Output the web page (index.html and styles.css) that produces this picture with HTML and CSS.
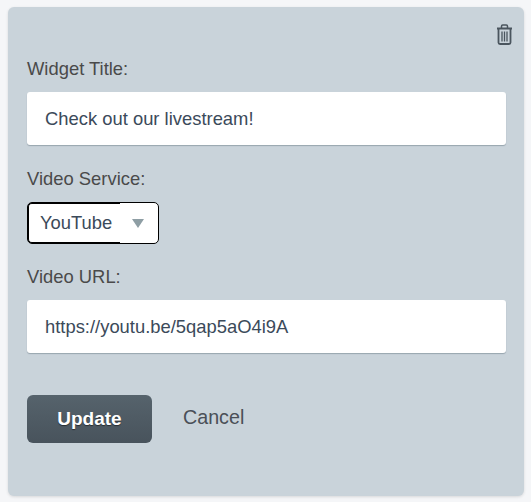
FILE: index.html
```html
<!DOCTYPE html>
<html lang="en">

<head>
    <meta charset="UTF-8">
    <title>Edit Widget</title>
    <link rel="stylesheet" href="styles.css">
</head>

<body>
    <form class="widget-form">
        <div class="toolbar">
            <button type="button" class="delete" aria-label="Delete">
                <svg width="17" height="21" viewBox="0 0 17 21" fill="none" stroke="#4a555e">
                    <path d="M1 4.500h15" stroke-width="2" />
                    <path d="M5.500 4V2.200C5.500 1.500 6 1 6.700 1h3.600c.7 0 1.200.5 1.200 1.200V4" stroke-width="1.500" />
                    <path d="M2.500 5v13.500c0 .8.600 1.500 1.500 1.500h9c.9 0 1.500-.7 1.500-1.500V5" stroke-width="1.800" />
                    <path d="M6 7.500v10M8.500 7.500v10M11 7.500v10" stroke-width="1.300" />
                </svg>
            </button>
        </div>

        <div class="field">
            <label for="title">Widget Title:</label>
            <input id="title" type="text" value="Check out our livestream!">
        </div>

        <div class="field field-select">
            <label for="service">Video Service:</label>
            <div class="select" id="service">
                <span class="select-value">YouTube</span>
                <span class="select-arrow"></span>
            </div>
        </div>

        <div class="field">
            <label for="url">Video URL:</label>
            <input id="url" type="text" value="https://youtu.be/5qap5aO4i9A">
        </div>

        <div class="actions">
            <button type="button" class="btn-update">Update</button>
            <a href="#" class="btn-cancel">Cancel</a>
        </div>
    </form>
</body>

</html>
```

FILE: styles.css
```css
* {
    box-sizing: border-box;
}

body {
    margin: 0;
    padding: 7px 7px 6px 8px;
    background-color: #f5f6f8;
    font-family: "Liberation Sans", Arial, sans-serif;
    font-size: 18.4px;
    color: #4a4a4a;
}

.widget-form {
    height: 489px;
    padding: 14px 18px 0 19px;
    border-radius: 6px;
    background-color: #c9d3da;
    box-shadow: 0 1px 3px rgba(0, 0, 0, .12);
}

.toolbar {
    display: flex;
    justify-content: flex-end;
    height: 37px;
    margin-right: -7px;
}

.delete {
    width: 17px;
    height: 21px;
    margin-top: 3px;
    padding: 0;
    border: none;
    background: none;
    cursor: pointer;
}

.delete svg {
    display: block;
}

.field {
    margin-bottom: 23px;
}

.field-select {
    margin-bottom: 22px;
}

.field label {
    display: block;
    height: 21px;
    margin-bottom: 13px;
    line-height: 21px;
}

.field input {
    display: block;
    width: 100%;
    height: 53px;
    padding: 0 18px;
    border: none;
    border-radius: 3px;
    background-color: #fff;
    box-shadow: 0 1px 1px rgba(60, 80, 95, .35);
    font: inherit;
    color: #3b4a5a;
}

.select {
    display: flex;
    align-items: center;
    width: 132px;
    height: 42px;
    border: 1px solid #000;
    border-radius: 5px;
    background-color: #fff;
    color: #3b4a5a;
}

.select-value {
    display: flex;
    align-items: center;
    align-self: stretch;
    width: 92px;
    padding-left: 12px;
    border-radius: 4px 0 0 4px;
    box-shadow: inset 1px 0 0 #000, inset 0 1px 0 #000, inset 0 -1px 0 #000;
}

.select-arrow {
    width: 0;
    height: 0;
    margin-left: 12px;
    border-top: 9px solid #8e9ea4;
    border-right: 6px solid transparent;
    border-left: 6px solid transparent;
}

.actions {
    display: flex;
    align-items: center;
    margin-top: 42px;
}

.btn-update {
    width: 125px;
    height: 48px;
    border: none;
    border-radius: 6px;
    background: linear-gradient(#56636c, #48535c);
    font: inherit;
    font-weight: bold;
    font-size: 19px;
    color: #fff;
    text-shadow: 0 1px 1px rgba(0, 0, 0, .5);
    cursor: pointer;
}

.btn-cancel {
    margin-left: 31px;
    margin-bottom: 4px;
    font-size: 19.7px;
    color: #4a4f57;
    text-decoration: none;
}
```
